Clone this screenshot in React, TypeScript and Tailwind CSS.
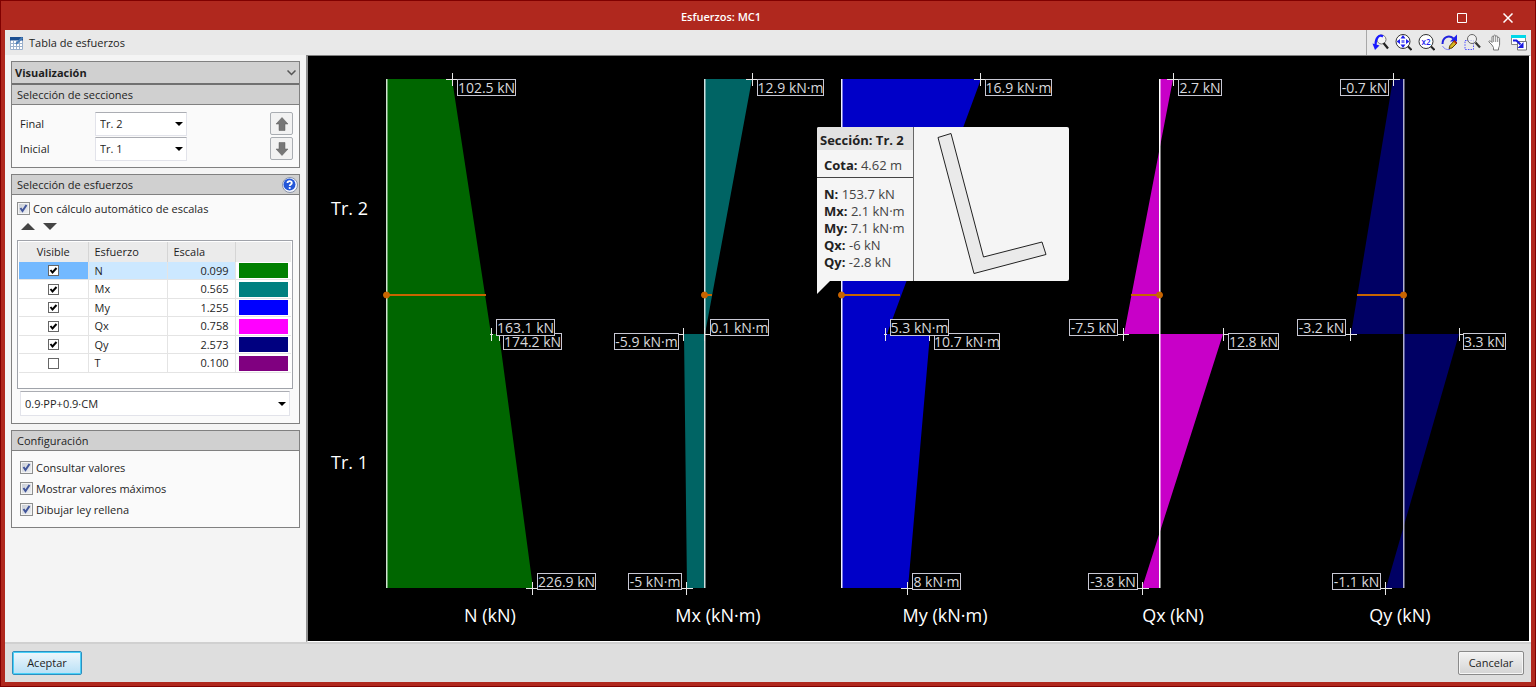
import { useState } from 'react';
import type { ReactNode } from 'react';

type Fuerza = {
	id: string;
	escala: string;
	color: string;
	visible: boolean;
};

const FUERZAS: Fuerza[] = [
	{ id: 'N', escala: '0.099', color: 'bg-[#008000]', visible: true },
	{ id: 'Mx', escala: '0.565', color: 'bg-[#008080]', visible: true },
	{ id: 'My', escala: '1.255', color: 'bg-[#0000ff]', visible: true },
	{ id: 'Qx', escala: '0.758', color: 'bg-[#ff00ff]', visible: true },
	{ id: 'Qy', escala: '2.573', color: 'bg-[#000080]', visible: true },
	{ id: 'T', escala: '0.100', color: 'bg-[#800080]', visible: false },
];

// Cotas de los tramos en el lienzo
const Y_TOP = 79;
const Y_MID = 334;
const Y_BOTTOM = 588;
const Y_CONSULTA = 295;

const DIAGRAMAS = [
	{ titulo: 'N (kN)', tituloX: 490, eje: 386, ejeColor: '#d0e0d0', color: '#006600', x: [452, 491, 499, 533], consulta: 486 },
	{ titulo: 'Mx (kN·m)', tituloX: 718, eje: 704, ejeColor: '#d0e0e0', color: '#006464', x: [752, 705, 684, 687], consulta: 712 },
	{ titulo: 'My (kN·m)', tituloX: 945, eje: 841, ejeColor: '#f0f0ff', color: '#0000c8', x: [981, 887, 930, 908], consulta: 900 },
	{ titulo: 'Qx (kN)', tituloX: 1173, eje: 1159, ejeColor: '#ffffff', color: '#c800c8', x: [1173, 1124, 1223, 1142], consulta: 1131 },
	{ titulo: 'Qy (kN)', tituloX: 1400, eje: 1403, ejeColor: '#b0b0d0', color: '#000064', x: [1393, 1351, 1459, 1386], consulta: 1357 },
];

// x, y, brazo izquierdo, brazo derecho
const CRUCES = [
	[452, 79, 6, 6], [752, 79, 6, 6], [980, 79, 6, 6], [1173, 79, 6, 6], [1393, 79, 6, 6],
	[491, 334, 1, 1], [499, 334, 0, 6], [683, 334, 6, 0], [704, 334, 0, 6], [885, 334, 1, 1],
	[929, 334, 0, 6], [1123, 334, 6, 5], [1223, 334, 0, 6], [1350, 334, 6, 6], [1459, 334, 0, 6],
	[532, 588, 6, 6], [686, 588, 6, 6], [907, 588, 6, 6], [1142, 588, 6, 6], [1385, 588, 6, 6],
];

const ETIQUETAS = [
	{ texto: '102.5 kN', x: 457, y: 79, w: 59 },
	{ texto: '12.9 kN·m', x: 757, y: 79, w: 67 },
	{ texto: '16.9 kN·m', x: 985, y: 79, w: 67 },
	{ texto: '2.7 kN', x: 1178, y: 79, w: 44 },
	{ texto: '-0.7 kN', x: 1340, y: 79, w: 49 },
	{ texto: '174.2 kN', x: 503, y: 333, w: 59 },
	{ texto: '163.1 kN', x: 496, y: 319, w: 59 },
	{ texto: '-5.9 kN·m', x: 614, y: 333, w: 65 },
	{ texto: '0.1 kN·m', x: 710, y: 319, w: 59 },
	{ texto: '10.7 kN·m', x: 934, y: 333, w: 66 },
	{ texto: '5.3 kN·m', x: 890, y: 319, w: 59 },
	{ texto: '-7.5 kN', x: 1069, y: 319, w: 49 },
	{ texto: '12.8 kN', x: 1228, y: 333, w: 51 },
	{ texto: '-3.2 kN', x: 1297, y: 319, w: 49 },
	{ texto: '3.3 kN', x: 1463, y: 333, w: 43 },
	{ texto: '226.9 kN', x: 537, y: 573, w: 59 },
	{ texto: '-5 kN·m', x: 628, y: 573, w: 54 },
	{ texto: '8 kN·m', x: 912, y: 573, w: 49 },
	{ texto: '-3.8 kN', x: 1088, y: 573, w: 50 },
	{ texto: '-1.1 kN', x: 1332, y: 573, w: 49 },
];

function Diagramas() {
	return (
		<svg viewBox="308 56 1221 585" className="block w-full h-auto">
			{DIAGRAMAS.map(({ titulo, tituloX, eje, ejeColor, color, x }) => (
				<g key={titulo}>
					<path
						fill={color}
						d={`M${eje} ${Y_TOP}H${x[0]}L${x[1]} ${Y_MID}H${eje}zM${eje} ${Y_MID}H${x[2]}L${x[3]} ${Y_BOTTOM}H${eje}z`}
					/>
					<rect x={eje} y={Y_TOP} width={1.5} height={Y_BOTTOM - Y_TOP} fill={ejeColor} />
					<text x={tituloX} y={622} textAnchor="middle" className="text-[18px] fill-white">
						{titulo}
					</text>
				</g>
			))}

			{CRUCES.map(([x, y, izq, der]) => (
				<path
					key={`${x}-${y}`}
					stroke="#e8e8e8"
					d={`M${x + 0.5} ${y - 6}v13M${x - izq} ${y + 0.5}h${izq + der + 1}`}
				/>
			))}

			{ETIQUETAS.map(({ texto, x, y, w }) => (
				<g key={`${texto}-${x}`}>
					<rect x={x + 0.5} y={y + 0.5} width={w - 1} height={16} fill="#000000" stroke="#c8c8d4" />
					<text x={x + w / 2} y={y + 14} textAnchor="middle" className="text-[14px] fill-[#d8d8dc]">
						{texto}
					</text>
				</g>
			))}

			{/* Línea de consulta */}
			{DIAGRAMAS.map(({ titulo, eje, consulta }) => (
				<g key={titulo} fill="#c86400" stroke="#c86400">
					<path strokeWidth={2} d={`M${eje} ${Y_CONSULTA}H${consulta}`} />
					<circle cx={eje + 0.5} cy={Y_CONSULTA} r={3} />
				</g>
			))}

			<text x={331} y={215} className="text-[18px] fill-white">
				Tr. 2
			</text>
			<text x={331} y={469} className="text-[18px] fill-white">
				Tr. 1
			</text>
		</svg>
	);
}

function Consulta() {
	const valores = [
		['N:', '153.7 kN'],
		['Mx:', '2.1 kN·m'],
		['My:', '7.1 kN·m'],
		['Qx:', '-6 kN'],
		['Qy:', '-2.8 kN'],
	];

	return (
		<div className="absolute left-[509px] top-[71px] text-[13px] text-[#444444]">
			<div className="flex w-[252px] h-[154px] bg-[#f5f5f5] rounded-t-xs rounded-br-xs overflow-hidden">
				<div className="w-[97px] shrink-0 border-r border-[#666666] whitespace-nowrap">
					<div className="h-[23px] pl-[3px] pt-[3px] leading-5 font-bold text-[#222222] bg-[#e2e2e2]">
						Sección: Tr. 2
					</div>
					<div className="h-7 pl-[7px] pt-[5px] leading-5 border-b border-[#444444]">
						<b className="text-[#222222]">Cota:</b> 4.62 m
					</div>
					<ul className="pl-[7px] pt-2">
						{valores.map(([nombre, valor]) => (
							<li key={nombre} className="h-[17px] leading-[17px]">
								<b className="text-[#222222]">{nombre}</b> {valor}
							</li>
						))}
					</ul>
				</div>
				<svg viewBox="0 0 154 154" className="w-[154px] h-[154px]">
					<path d="M24 10.500L37 6.500L69.500 130L128 115L132 127.500L60 146.500z" fill="#eaeaea" stroke="#222222" />
				</svg>
			</div>
			<svg viewBox="0 0 13 13" className="block w-[13px] h-[13px]">
				<path d="M0 0H13L0 13z" fill="#f5f5f5" />
			</svg>
		</div>
	);
}

function Casilla({ etiqueta, inicial = true }: { etiqueta: string; inicial?: boolean }) {
	const [marcada, setMarcada] = useState(inicial);

	return (
		<label className="flex items-center gap-[3px] h-[21px]">
			<span className="relative w-[13px] h-[13px]">
				<input
					type="checkbox"
					checked={marcada}
					onChange={() => setMarcada(!marcada)}
					className="block appearance-none w-[13px] h-[13px] border border-[#8e8f8f] bg-linear-to-br from-[#c5cad2] to-[#f2f3f5] shadow-[inset_0_0_0_1px_#f4f4f4]"
				/>
				{marcada && (
					<svg viewBox="0 0 13 13" className="absolute inset-0 w-[13px] h-[13px] pointer-events-none">
						<path d="M3.500 6L5.500 9L9.500 3" fill="none" stroke="#41559a" strokeWidth="2" />
					</svg>
				)}
			</span>
			{etiqueta}
		</label>
	);
}

function Lista({ id, opciones, inicial, className }: { id: string; opciones: string[]; inicial: string; className: string }) {
	return (
		<div className={`relative ${className}`}>
			<select
				id={id}
				aria-label={id}
				defaultValue={inicial}
				className="block appearance-none w-full h-full pl-1 bg-white border border-[#e2e3ea] border-t-[#abadb3]"
			>
				{opciones.map((opcion) => (
					<option key={opcion}>{opcion}</option>
				))}
			</select>
			<svg viewBox="0 0 8 4" className="absolute right-1 top-1/2 -mt-0.5 w-2 h-1 pointer-events-none">
				<path d="M0 0H8L4 4z" />
			</svg>
		</div>
	);
}

function Cabecera({ children }: { children: ReactNode }) {
	return (
		<h2 className="flex items-center justify-between h-5 pl-[5px] bg-[#d0d0d0] border-b border-[#808080]">
			{children}
		</h2>
	);
}

function BotonTramo({ etiqueta, d }: { etiqueta: string; d: string }) {
	return (
		<button
			type="button"
			aria-label={etiqueta}
			className="flex items-center justify-center w-[23px] h-[23px] bg-[#f2f2f2] border border-[#a9adb2] rounded-xs"
		>
			<svg viewBox="0 0 14 14" className="w-[14px] h-[14px]">
				<path d={d} fill="#777777" stroke="#5c5c5c" strokeWidth="0.5" />
			</svg>
		</button>
	);
}

function Herramienta({ etiqueta, children }: { etiqueta: string; children: ReactNode }) {
	return (
		<button type="button" aria-label={etiqueta} className="flex items-center justify-center w-[17px] h-[17px]">
			<svg viewBox="0 0 17 17" fill="none" className="w-[17px] h-[17px]">
				{children}
			</svg>
		</button>
	);
}

function Herramientas() {
	return (
		<div className="flex items-center gap-[6px] h-full pl-[5px] pr-1 border-l border-[#a8a8a8]">
			<Herramienta etiqueta="Vista previa">
				<circle cx="9.500" cy="5.500" r="4.500" fill="#f4f4f4" stroke="#777777" />
				<path d="M11.500 9L16 14.500" stroke="#222222" strokeWidth="2.200" />
				<path d="M11 2.500C7 0 3.500 4 3.500 11" stroke="#1a1aff" strokeWidth="2.200" />
				<path d="M0.500 9.500L7.500 11.500L3 16z" fill="#1a1aff" />
			</Herramienta>
			<Herramienta etiqueta="Ventana completa">
				<circle cx="8" cy="7.500" r="7" fill="#ffffff" stroke="#333333" />
				<path d="M13 12.500L16.500 16" stroke="#222222" strokeWidth="2" />
				<path d="M8 1L10.500 4.500H5.500zM8 14L10.500 10.500H5.500zM1.500 7.500L5 5V10zM14.500 7.500L11 5V10z" fill="#2020ee" />
				<path d="M6.500 6H9.500V9H6.500z" fill="#2020ee" fillOpacity="0.600" />
			</Herramienta>
			<Herramienta etiqueta="Ampliar x2">
				<circle cx="8" cy="7.500" r="7" fill="#ffffff" stroke="#333333" />
				<path d="M13 12.500L16.500 16" stroke="#222222" strokeWidth="2" />
				<text x="8" y="10.500" textAnchor="middle" className="text-[8px] font-semibold fill-[#2020ee]">
					x2
				</text>
			</Herramienta>
			<Herramienta etiqueta="Redibujar">
				<path d="M1.500 10C1.500 3 8 0.500 12.500 4.500" stroke="#2222dd" strokeWidth="2" />
				<path d="M16 0.500V7.500H9z" fill="#2020ee" />
				<path d="M1.500 12C3 15 6 16 9 15.500" stroke="#8888ee" />
				<path d="M8 14.500L9 11.500L13.500 6.500L16 9L11 14z" fill="#d6b820" stroke="#5b4100" />
				<path d="M13 7L15.500 9.500" stroke="#c02020" strokeWidth="1.500" />
			</Herramienta>
			<Herramienta etiqueta="Marcar zoom">
				<path d="M1 6.500H9.500V15.500H1z" stroke="#5050ff" strokeDasharray="1.500 1.200" />
				<circle cx="8" cy="5" r="4.500" fill="#f4f4f4" fillOpacity="0.700" stroke="#666666" />
				<path d="M11.500 8.500L16 13.500" stroke="#333333" strokeWidth="2.200" />
			</Herramienta>
			<Herramienta etiqueta="Mover imagen">
				<path
					d="M5 11L2 8C1.500 7 2.500 6.500 3.500 7L5 8.500V3C5 2 6.500 2 6.700 3V1.800C7 0.800 8.400 0.800 8.700 1.800V2.500C9 1.500 10.600 1.700 10.700 2.700V4C11 3.200 12.600 3.300 12.600 4.500V10C12.600 12 12 13 11.500 14V16H6.500V13.500z"
					fill="#ffffff"
					stroke="#777777"
				/>
				<path d="M6.700 3V8M8.700 2V8M10.700 4V8" stroke="#888888" />
			</Herramienta>
			<Herramienta etiqueta="Cambiar de ventana">
				<path d="M1.500 1.500H15.500V10.500H1.500z" fill="#ffffff" stroke="#888888" />
				<path d="M1 1H16V4H1z" fill="#00d8e8" />
				<path d="M7.500 7.500H16.500V16H7.500z" fill="#ffffff" stroke="#777777" />
				<path d="M3 6.500H6.500L10.500 10.500" stroke="#1a1ae0" strokeWidth="2" />
				<path d="M13.500 8V14H7.500z" fill="#1a1ae0" />
			</Herramienta>
		</div>
	);
}

export default function App() {
	const [fuerzas, setFuerzas] = useState(FUERZAS);

	const alternar = (id: string) => {
		setFuerzas(fuerzas.map((f) => (f.id === id ? { ...f, visible: !f.visible } : f)));
	};

	return (
		<div className="flex flex-col min-h-screen bg-[#b0281e] border border-[#800000] px-1 pb-1 font-['Open_Sans','Noto_Sans',sans-serif] text-[11px] leading-4 text-[#1e1e1e]">
			{/* Barra de título */}
			<header className="relative flex items-center justify-center h-[29px] shrink-0 text-white">
				<h1 className="pt-[3px] pr-24 pl-[2px] font-semibold">Esfuerzos: MC1</h1>
				<div className="absolute right-0 flex pt-1">
					<button type="button" aria-label="Maximizar" className="flex items-center justify-center w-[46px] h-6">
						<svg viewBox="0 0 10 10" className="w-[10px] h-[10px]">
							<path d="M0.500 0.500H9.500V9.500H0.500z" fill="none" stroke="#ffffff" />
						</svg>
					</button>
					<button type="button" aria-label="Cerrar" className="flex items-center justify-center w-[46px] h-6">
						<svg viewBox="0 0 10 10" className="w-[10px] h-[10px]">
							<path d="M0.500 0.500L9.500 9.500M9.500 0.500L0.500 9.500" stroke="#ffffff" strokeWidth="1.500" />
						</svg>
					</button>
				</div>
			</header>

			<div className="flex items-center justify-between h-[25px] shrink-0 bg-[#e9e9e9]">
				<button type="button" className="flex items-center gap-[5px] pl-[5px]">
					<svg viewBox="0 0 14 14" className="w-[14px] h-[14px]">
						<path d="M0.500 1.500H12.500V13.500H0.500z" fill="#ffffff" stroke="#9ab0cc" />
						<path d="M3.500 5V13M6.500 5V13M9.500 5V13M1 7.500H12M1 10.500H12" stroke="#9ab0cc" />
						<path d="M0 1H13V4.500H0z" fill="#1d4f91" />
						<path d="M6 8L12.500 1.500" stroke="#4d7fb8" strokeWidth="2" />
					</svg>
					Tabla de esfuerzos
				</button>
				<Herramientas />
			</div>

			<div className="flex flex-1 bg-[#f4f4f4]">
				<aside className="flex flex-col gap-1.5 w-[301px] shrink-0 p-1.5">
					<section className="bg-[#fafafa] border border-[#808080]">
						<h2 className="flex items-center justify-between h-[23px] px-[3px] bg-[#d0d0d0] border-b-2 border-[#707070] font-bold">
							Visualización
							<svg viewBox="0 0 9 6" className="w-[9px] h-[6px]">
								<path d="M0.500 0.500L4.500 4.500L8.500 0.500" fill="none" stroke="#555555" strokeWidth="1.500" />
							</svg>
						</h2>
						<Cabecera>Selección de secciones</Cabecera>
						<div className="flex justify-between pl-2 pr-[6px] pt-[7px] pb-[6px]">
							<div className="grid grid-cols-[75px_92px] gap-y-[1px] items-center">
								<label htmlFor="Final">Final</label>
								<Lista id="Final" opciones={['Tr. 2', 'Tr. 1']} inicial="Tr. 2" className="h-6" />
								<label htmlFor="Inicial">Inicial</label>
								<Lista id="Inicial" opciones={['Tr. 2', 'Tr. 1']} inicial="Tr. 1" className="h-6" />
							</div>
							<div className="flex flex-col gap-[2px]">
								<BotonTramo etiqueta="Subir tramo" d="M7 0.500L13 7H10V13.500H4V7H1z" />
								<BotonTramo etiqueta="Bajar tramo" d="M7 13.500L13 7H10V0.500H4V7H1z" />
							</div>
						</div>
					</section>

					<section className="bg-[#fafafa] border border-[#808080]">
						<Cabecera>
							Selección de esfuerzos
							<button type="button" aria-label="Ayuda" className="pr-[1px]">
								<svg viewBox="0 0 16 16" className="w-4 h-4">
									<circle cx="8" cy="8" r="7.500" fill="#f4f7ff" stroke="#8a94a8" />
									<circle cx="7.500" cy="7.500" r="6" fill="#2457d8" />
									<path d="M5.500 6C5.500 3.500 9.800 3.500 9.800 6C9.800 7.500 7.700 7.300 7.700 9" fill="none" stroke="#ffffff" strokeWidth="1.800" />
									<circle cx="7.700" cy="11" r="1.100" fill="#ffffff" />
								</svg>
							</button>
						</Cabecera>
						<div className="pl-[5px] pr-1.5 pt-[3px] pb-[7px]">
							<Casilla etiqueta="Con cálculo automático de escalas" />
							<div className="flex gap-2 pl-1 pt-1 pb-[10px]">
								<button type="button" aria-label="Subir">
									<svg viewBox="0 0 14 7" className="w-[14px] h-[7px]">
										<path d="M0 7L7 0L14 7z" fill="#444444" />
									</svg>
								</button>
								<button type="button" aria-label="Bajar">
									<svg viewBox="0 0 14 7" className="w-[14px] h-[7px]">
										<path d="M0 0H14L7 7z" fill="#444444" />
									</svg>
								</button>
							</div>

							<div className="h-[149px] p-px bg-white border border-[#a0a3aa]">
								<table className="w-full h-[131px] table-fixed border-collapse">
									<thead>
										<tr className="h-5 bg-[#ebebeb] text-left">
											<th className="w-[69px] font-normal text-center border-r border-[#d5d5d5]">Visible</th>
											<th className="w-[79px] font-normal pl-1.5 border-r border-[#d5d5d5]">Esfuerzo</th>
											<th className="w-[68px] font-normal pl-1.5 border-r border-[#d5d5d5]">Escala</th>
											<th aria-label="Color" />
										</tr>
									</thead>
									<tbody>
										{fuerzas.map(({ id, escala, color, visible }) => (
											<tr key={id} className="border-b border-[#e4e4e4] first:bg-[#cce8ff] group">
												<td className="border-r border-[#e4e4e4] group-first:bg-[#73b9ff]">
													<span className="relative block w-[11px] h-[11px] mx-auto">
														<input
															type="checkbox"
															aria-label={id}
															checked={visible}
															onChange={() => alternar(id)}
															className="block appearance-none w-[11px] h-[11px] bg-white border border-[#666666]"
														/>
														{visible && (
															<svg viewBox="0 0 11 11" className="absolute inset-0 w-[11px] h-[11px] pointer-events-none">
																<path d="M2.500 5L4.500 7.500L8.500 3" fill="none" stroke="#000000" strokeWidth="2" />
															</svg>
														)}
													</span>
												</td>
												<td className="pl-1.5 border-r border-[#e4e4e4]">{id}</td>
												<td className="pr-1.5 text-right border-r border-[#e4e4e4]">{escala}</td>
												<td className="pl-[3px] bg-white">
													<div className={`w-[49px] h-[15px] ${color}`} />
												</td>
											</tr>
										))}
									</tbody>
								</table>
							</div>

							<Lista
								id="Combinación"
								opciones={['0.9·PP+0.9·CM']}
								inicial="0.9·PP+0.9·CM"
								className="h-[25px] mt-[2px] mx-[3px]"
							/>
						</div>
					</section>

					<section className="bg-[#fafafa] border border-[#808080]">
						<Cabecera>Configuración</Cabecera>
						<div className="px-2 pt-[6px] pb-[7px]">
							<Casilla etiqueta="Consultar valores" />
							<Casilla etiqueta="Mostrar valores máximos" />
							<Casilla etiqueta="Dibujar ley rellena" />
						</div>
					</section>
				</aside>

				<main className="relative flex-1 bg-black border-t border-l-2 border-r-2 border-b border-t-[#808080] border-l-[#909090] border-r-white border-b-white">
					<Diagramas />
					<Consulta />
				</main>
			</div>

			<footer className="flex items-center justify-between shrink-0 h-10 px-[7px] bg-[#dedede] border-t-2 border-[#d0d0d0]">
				<button
					type="button"
					className="w-[70px] h-6 border border-[#2c8fc0] rounded-xs bg-linear-to-b from-[#eef7fc] to-[#b8e0f6] shadow-[inset_0_0_0_1px_#48d0f8]"
				>
					Aceptar
				</button>
				<button
					type="button"
					className="w-[66px] h-6 border border-[#8a8a8a] rounded-xs bg-linear-to-b from-[#f3f3f3] to-[#d4d4d4] shadow-[inset_0_0_0_1px_#f6f6f6]"
				>
					Cancelar
				</button>
			</footer>
		</div>
	);
}
